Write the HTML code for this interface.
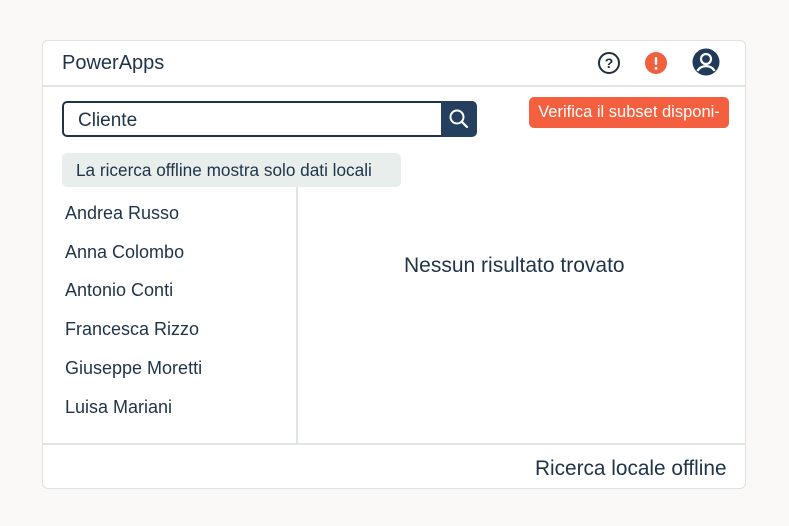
<!DOCTYPE html>
<html><head><style>
body{margin:0;width:789px;height:526px;background:#faf9f8;font-family:"Liberation Sans",sans-serif;color:#1f3349;position:relative;overflow:hidden}
.card{position:absolute;left:42px;top:40px;width:704px;height:449px;background:#fff;border:1.5px solid #dfe2e4;border-radius:6px;box-sizing:border-box}
.abs{position:absolute}
</style></head><body>
<div class="card"></div>
<div class="abs" style="left:62px;top:52px;font-size:20px">PowerApps</div>
<div class="abs" style="left:43px;top:85px;width:702px;height:1.5px;background:#e2e5e7"></div>
<svg class="abs" style="left:597px;top:51px" width="24" height="24" viewBox="0 0 24 24"><circle cx="12" cy="12" r="10" fill="none" stroke="#1f2f40" stroke-width="2"/><text x="12" y="17" text-anchor="middle" font-size="14" font-weight="bold" font-family="Liberation Sans" fill="#1f2f40">?</text></svg>
<svg class="abs" style="left:644px;top:51px" width="24" height="24" viewBox="0 0 24 24"><circle cx="12" cy="12" r="11" fill="#f0603f"/><rect x="10.8" y="6" width="2.4" height="8" rx="1" fill="#fff"/><circle cx="12" cy="17.3" r="1.4" fill="#fff"/></svg>
<svg class="abs" style="left:692px;top:48px" width="28" height="28" viewBox="0 0 28 28"><circle cx="14" cy="14" r="13.5" fill="#1f3b59"/><circle cx="14" cy="11" r="5" fill="none" stroke="#fff" stroke-width="2.2"/><path d="M5.5 23 C8 16.5 20 16.5 22.5 23" fill="none" stroke="#fff" stroke-width="2.2"/></svg>
<div class="abs" style="left:62px;top:101px;width:380px;height:36px;border:2px solid #1f3349;border-right:none;border-radius:5px 0 0 5px;box-sizing:border-box;font-size:19px;line-height:36px;padding-left:14px">Cliente</div>
<div class="abs" style="left:441px;top:101px;width:36px;height:36px;background:#24405e;border-radius:0 5px 5px 0"><svg width="36" height="36" viewBox="0 0 36 36"><circle cx="16" cy="16" r="6.5" fill="none" stroke="#fff" stroke-width="2"/><path d="M21 21l5 5" stroke="#fff" stroke-width="2.2" stroke-linecap="round"/></svg></div>
<div class="abs" style="left:529px;top:97px;width:200px;height:31px;background:#f4603f;border-radius:5px;color:#fff;font-size:16.5px;line-height:31px;text-align:center">Verifica il subset disponi-</div>
<div class="abs" style="left:62px;top:153px;width:339px;height:34px;background:#e7eeec;border-radius:5px;font-size:17.2px;line-height:34px;padding-left:14px;box-sizing:border-box;white-space:nowrap">La ricerca offline mostra solo dati locali</div>
<div class="abs" style="left:296px;top:187px;width:1.5px;height:257px;background:#dfe3e5"></div>
<div class="abs" style="left:43px;top:443px;width:702px;height:1.5px;background:#e2e5e7"></div>
<div class="abs" style="left:65px;top:194px;font-size:18px;line-height:38.7px">Andrea Russo<br>Anna Colombo<br>Antonio Conti<br>Francesca Rizzo<br>Giuseppe Moretti<br>Luisa Mariani</div>
<div class="abs" style="left:404px;top:254px;font-size:21px">Nessun risultato trovato</div>
<div class="abs" style="left:535px;top:457px;font-size:20.8px">Ricerca locale offline</div>
</body></html>
